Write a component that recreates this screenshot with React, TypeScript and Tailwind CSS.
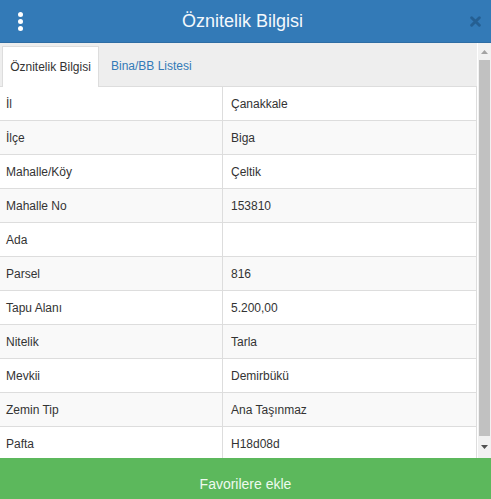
import React from "react";

const rows: [string, string][] = [
  ["İl", "Çanakkale"],
  ["İlçe", "Biga"],
  ["Mahalle/Köy", "Çeltik"],
  ["Mahalle No", "153810"],
  ["Ada", ""],
  ["Parsel", "816"],
  ["Tapu Alanı", "5.200,00"],
  ["Nitelik", "Tarla"],
  ["Mevkii", "Demirbükü"],
  ["Zemin Tip", "Ana Taşınmaz"],
  ["Pafta", "H18d08d"],
];

export default function App() {
  return (
    <div
      className="w-[491px] h-[499px] flex flex-col overflow-hidden bg-white text-[#333]"
      style={{ fontFamily: '"Liberation Sans", Arial, sans-serif' }}
    >
      <div className="h-[43px] shrink-0 bg-[#337ab7] flex items-center relative border-b border-[#2e6da4]">
        <div className="w-[40px] flex flex-col items-center gap-[2px] pl-[1px]">
          <span className="w-[5px] h-[5px] rounded-full bg-white" />
          <span className="w-[5px] h-[5px] rounded-full bg-white" />
          <span className="w-[5px] h-[5px] rounded-full bg-white" />
        </div>
        <div className="flex-1 text-center text-[#f4f8fc] text-[18px] leading-none pr-[6px]">Öznitelik Bilgisi</div>
        <div className="w-[40px] flex items-center justify-center pl-[8px] pt-[1px]">
          <svg width="11" height="11" viewBox="0 0 10 10">
            <path d="M1.5 1.5L8.5 8.5M8.5 1.5L1.5 8.5" stroke="#22598a" strokeWidth="2.6" strokeLinecap="round" opacity="0.8" />
          </svg>
        </div>
      </div>
      <div className="flex-1 flex min-h-0">
        <div className="flex-1 min-w-0 flex flex-col overflow-hidden">
          <div className="h-[44px] shrink-0 bg-[#eeeeee] flex items-end pl-[2px] border-b border-[#dddddd]">
            <div className="h-[41px] w-[97px] bg-white border border-[#dddddd] border-b-0 flex items-center justify-center text-[12px] text-[#333] -mb-px">
              Öznitelik Bilgisi
            </div>
            <div className="h-[41px] px-[12px] flex items-center text-[12px] text-[#337ab7]">Bina/BB Listesi</div>
          </div>
          <div className="flex flex-col">
            {rows.map(([k, v], i) => (
              <div
                key={k}
                className={`h-[34px] shrink-0 flex border-b border-[#dddddd] text-[12px] ${i % 2 === 1 ? "bg-[#f9f9f9]" : "bg-white"}`}
              >
                <div className="w-[223px] border-r border-[#dddddd] flex items-center pl-[6px]">{k}</div>
                <div className="flex-1 flex items-center pl-[8px] border-r border-[#dddddd]">{v}</div>
              </div>
            ))}
          </div>
        </div>
        <div className="w-[13px] ml-[1px] shrink-0 bg-[#f1f1f1] flex flex-col">
          <div className="h-[17px] flex items-center justify-center">
            <svg width="7" height="4" viewBox="0 0 7 4"><path d="M3.5 0L7 4H0Z" fill="#a3a3a3" /></svg>
          </div>
          <div className="flex-1 bg-[#c1c1c1] mx-[1px]" />
          <div className="h-[22px] flex items-center justify-center">
            <svg width="7" height="4" viewBox="0 0 7 4"><path d="M0 0H7L3.5 4Z" fill="#505050" /></svg>
          </div>
        </div>
      </div>
      <div className="h-[41px] shrink-0 bg-[#5cb85c] flex items-center justify-center pt-[12px] text-[14px] text-[#eefaee]">
        Favorilere ekle
      </div>
    </div>
  );
}
